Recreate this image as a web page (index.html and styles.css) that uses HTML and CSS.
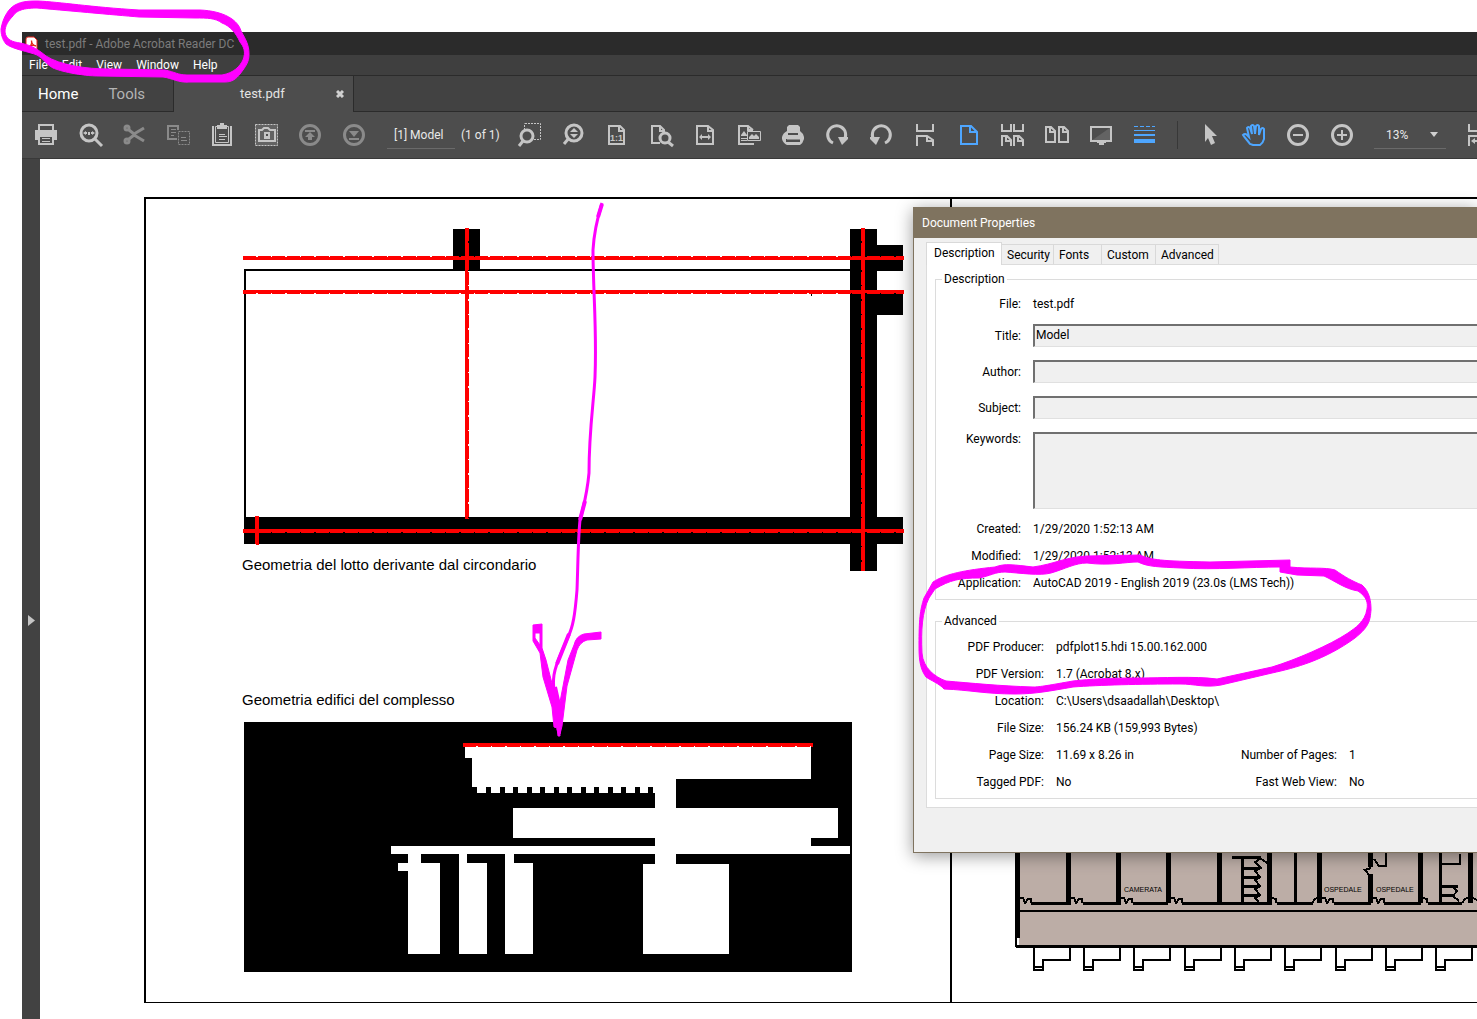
FILE: index.html
```html
<!DOCTYPE html>
<html lang="en">
<head>
    <meta charset="UTF-8">
    <meta name="viewport" content="width=device-width, initial-scale=1.0">
    <title>test.pdf - Adobe Acrobat Reader DC</title>
    <link rel="stylesheet" href="styles.css">
</head>
<body>
    <div class="app">
        <header class="titlebar">
            <svg class="app-icon" width="14" height="16" viewBox="0 0 14 16">
                <path d="M1 3q0-2 2-2h6l3 3v9q0 2-2 2H3q-2 0-2-2z" fill="#fff" stroke="#e5231b"/>
                <path d="M3 11.500c3-1 4-4 3.500-7c0 3 2 5 4.500 5.500c-3-1-6-.5-8 1.500z" fill="none" stroke="#e5231b" stroke-width="1.300"/>
            </svg>
            <span>test.pdf - Adobe Acrobat Reader DC</span>
        </header>

        <nav class="menubar">
            <button>File</button>
            <button>Edit</button>
            <button>View</button>
            <button>Window</button>
            <button>Help</button>
        </nav>

        <div class="tabbar">
            <div class="tab-main">
                <button class="home">Home</button>
                <button class="tools">Tools</button>
            </div>
            <div class="tab-doc">
                <span>test.pdf</span>
                <button class="close" aria-label="Close">
                    <svg width="8" height="8" viewBox="0 0 8 8"><path d="M1 1l6 6M7 1l-6 6" stroke="#d0d0d0" stroke-width="3"/></svg>
                </button>
            </div>
            <div class="tab-rest"></div>
        </div>

        <div class="toolbar">
            <button class="tool" aria-label="Print">
                <svg viewBox="0 0 30 30"><path d="M8 10V5h14v5"/><path class="solid" d="M4 10h22v10h-3v5H7v-5H4z"/><path class="hole" d="M9 17h12v6H9z"/><path class="thin" d="M11 18.500h8M11 21.500h8"/></svg>
            </button>
            <button class="tool" aria-label="Find">
                <svg viewBox="0 0 30 30"><circle class="bold" cx="14" cy="13" r="8"/><path class="bold" d="M20 19l7 7"/><path class="solid" d="M8 13l3-2v1h1v2h-1v1zM20 13l-3-2v1h-1v2h1v1zM13 12h2v3h-2z"/></svg>
            </button>
            <button class="tool" aria-label="Cut" disabled>
                <svg viewBox="0 0 30 30"><circle class="bold" cx="8" cy="8" r="2"/><circle class="bold" cx="8" cy="21" r="2"/><path class="bold" d="M10 10l5 4l10-6M10 19l5-4l10 6"/></svg>
            </button>
            <button class="tool" aria-label="Copy" disabled>
                <svg viewBox="0 0 30 30"><path d="M15 10V6H5v13h9"/><path class="thin" d="M8 9.500h5M8 12.500h5M8 15.500h3M18 17.500h5M18 20.500h6"/><path class="thin dashed" d="M15.500 11.500h11v13h-11z"/></svg>
            </button>
            <button class="tool" aria-label="Paste">
                <svg viewBox="0 0 30 30"><path d="M6 6v19h18V6"/><path class="thin" d="M8.500 6.500h13v16h-13z"/><path class="solid" d="M10 5h3V3h4v2h3v4H10z"/><path class="thin" d="M12 14.500h6M12 16.500h8M12 19.500h6"/></svg>
            </button>
            <button class="tool" aria-label="Take a snapshot">
                <svg viewBox="0 0 30 30"><path class="shade" d="M4 4h23v22H4z"/><path class="thin dashed" d="M4.500 4.500h22v21h-22z"/><path d="M8 10h3l2-2h4l2 2h5v11H8z"/><path class="solid" d="M13 12h6v7h-6z"/><path class="hole" d="M15 14h2v2h-2z"/></svg>
            </button>
            <button class="tool" aria-label="Previous page" disabled>
                <svg viewBox="0 0 30 30"><circle class="bold" cx="15" cy="15" r="9.500"/><path d="M10 11h10"/><path class="solid" d="M15 12l5 5h-3v3h-4v-3h-3z"/></svg>
            </button>
            <button class="tool" aria-label="Next page" disabled>
                <svg viewBox="0 0 30 30"><circle class="bold" cx="15" cy="15" r="9.500"/><path d="M10 19h10"/><path class="solid" d="M10 11h10l-5 6z"/></svg>
            </button>

            <input class="page-input" type="text" value="[1] Model" aria-label="Page">
            <span class="page-count">(1 of 1)</span>

            <button class="tool" aria-label="Marquee zoom">
                <svg viewBox="0 0 30 30"><path class="thin dashed" d="M11 3.500h15.500v16H20M10.500 10V3.500"/><circle class="bold" cx="13" cy="16" r="6"/><path class="bold" d="M9 21l-4 5"/></svg>
            </button>
            <button class="tool" aria-label="Dynamic zoom">
                <svg viewBox="0 0 30 30"><circle class="bold" cx="16" cy="13" r="8"/><path class="bold" d="M11 18l-5 6"/><path class="solid" d="M12 12l4-4l4 4zM12 14h8l-4 4z"/></svg>
            </button>
            <button class="tool" aria-label="Actual size">
                <svg viewBox="0 0 30 30"><path d="M7 6h11l4 4v14H7z"/><path d="M17 6v5h5"/><text x="8" y="21">1:1</text></svg>
            </button>
            <button class="tool" aria-label="Zoom to page level">
                <svg viewBox="0 0 30 30"><path d="M14 23H6V6h8l4 4v2M14 6v5h4"/><circle class="bold" cx="19" cy="18" r="5"/><path class="bold" d="M22 22l5 4"/></svg>
            </button>
            <button class="tool" aria-label="Fit width">
                <svg viewBox="0 0 30 30"><path d="M7 6h11l5 4v14H7z"/><path d="M18 6v5h5M11 17h8"/><path class="solid" d="M9 17l3-3v6zM21 17l-3-3v6z"/></svg>
            </button>
            <button class="tool" aria-label="Fit visible">
                <svg viewBox="0 0 30 30"><path d="M20 24H5V6h9l5 4"/><path d="M14 6v4h5"/><path class="solid" d="M7 15l3-4l3 4v1H7z"/><path class="thin" d="M7 18.500h6M7 20.500h6M13.500 11.500h13v9h-13z"/><path class="solid" d="M15 19v-2l3-3l2 2l2-2l3 3v2z"/></svg>
            </button>
            <button class="tool" aria-label="Print production">
                <svg viewBox="0 0 30 30"><path class="solid" d="M11 5h9l2 2v4q3 2 4 6v2q-1 4-4 6H9q-4-2-5-6v-2q1-4 5-6V7z"/><path class="hole" d="M10 13h10v2H10zM8 19h14v3H8z"/><path d="M9 18.500h13"/></svg>
            </button>
            <button class="tool" aria-label="Rotate clockwise">
                <svg viewBox="0 0 30 30"><path class="bold" d="M11 23a9 9 0 1 1 11-3"/><path class="solid" d="M16 17h10v2l-6 6z"/></svg>
            </button>
            <button class="tool" aria-label="Rotate counterclockwise">
                <svg viewBox="0 0 30 30"><path class="bold" d="M19 23a9 9 0 1 0-11-3"/><path class="solid" d="M14 17H4v2l6 6z"/></svg>
            </button>
            <button class="tool" aria-label="Scrolling pages">
                <svg viewBox="0 0 30 30"><path d="M7 4v7h16V4M7 26V16h10l6 4v6M17 16v5h5"/></svg>
            </button>
            <button class="tool active" aria-label="Single page">
                <svg viewBox="0 0 30 30"><path d="M7 6h10l6 6v12H7z"/><path d="M16 6v6h6"/></svg>
            </button>
            <button class="tool" aria-label="Two page scrolling">
                <svg viewBox="0 0 30 30"><path d="M4 4v7h9V4M16 4v7h9V4M4 26V16h5l4 4v6M8 16v5h5M16 26V16h5l4 4v6M20 16v5h5"/></svg>
            </button>
            <button class="tool" aria-label="Two page view">
                <svg viewBox="0 0 30 30"><path d="M4 7h5l4 4v11H4zM8 7v5h5M17 7h5l4 4v11h-9zM21 7v5h5"/></svg>
            </button>
            <button class="tool" aria-label="Read mode">
                <svg viewBox="0 0 30 30"><path class="shade" d="M25 7v14H5z"/><path d="M4 7h21v14H5V7"/><path class="solid" d="M11 22h9v1h-2v2h-5v-2h-2z"/></svg>
            </button>
            <button class="tool active" aria-label="Line weights">
                <svg viewBox="0 0 30 30"><path class="thin dashes" d="M4 6.500h21"/><path class="thin" d="M4 10.500h21"/><path d="M4 15h21"/><path class="solid" d="M4 19h21v4H4z"/></svg>
            </button>

            <div class="separator"></div>

            <button class="tool" aria-label="Select">
                <svg viewBox="0 0 30 30"><path class="solid" d="M10 4l12 12h-5l3 7l-4 2l-3-7l-3 4z"/></svg>
            </button>
            <button class="tool active" aria-label="Pan">
                <svg viewBox="0 0 30 30"><path d="M11 24c-2-3-5-6-7-9q2-2 4 0l2 2L8 8q1-2 3 0l2 6l-1-8q2-2 3 0l1 8l1-8q2-2 3 0v9l2-6q2-2 3 0v10q-1 4-4 6h-7z"/></svg>
            </button>
            <button class="tool" aria-label="Zoom out">
                <svg viewBox="0 0 30 30"><circle class="bold" cx="15" cy="15" r="9.500"/><path d="M10 15h10"/></svg>
            </button>
            <button class="tool" aria-label="Zoom in">
                <svg viewBox="0 0 30 30"><circle class="bold" cx="15" cy="15" r="9.500"/><path d="M10 15h10M15 10v10"/></svg>
            </button>
            <div class="zoom-box">
                <select class="zoom" aria-label="Zoom level">
                    <option>13%</option>
                </select>
                <svg width="8" height="5" viewBox="0 0 8 5"><path d="M0 0h8L4 5z" fill="#d0d0d0"/></svg>
            </div>
            <button class="tool" aria-label="Fit page">
                <svg viewBox="0 0 30 30"><path d="M6 4v7h18V4M6 26V16h12l6 4v6M12 21h8"/><path class="solid" d="M8 21l4-3v6z"/></svg>
            </button>
        </div>

        <div class="workspace">
            <aside class="nav-pane">
                <button aria-label="Show navigation pane">
                    <svg width="7" height="11" viewBox="0 0 7 11"><path d="M0 0l7 5.500L0 11z" fill="#c5c5c5"/></svg>
                </button>
            </aside>
            <main class="document">
                <svg class="sheet" width="100%" height="100%">
                    <defs>
                        <path id="step" d="M1034 948v22h9v-10h27v-12M1034 967h9"/>
                        <path id="door" d="M1020 898h3l2 5l3-4h3v4"/>
                    </defs>
                    <g transform="translate(-40 -159)">
                        <!-- sheet frame -->
                        <path class="ink" d="M1600 198H145v804M951 198v804"/>
                        <path class="hair" d="M144 1002.500H1600"/>

                        <!-- lot geometry -->
                        <path class="ink" d="M850 270H245v250"/>
                        <path d="M453 229h27v41h-27zM850 229h27v16h26v26h-26v22h26v22h-26v202h26v27h-26v27h-27v-27H244v-27h606zM811 293h3v1h-2v2h-1z"/>
                        <path class="axis" d="M243 258h661M243 292h661M243 531h661M467 228v291M863 228v343M257 516v29"/>
                        <path class="axis-core" d="M243 258.500h661M243 291.500h661M243 530.500h661M466.500 228v291M863.500 228v343M257.500 516v29"/>
                        <text class="caption" x="242" y="570">Geometria del lotto derivante dal circondario</text>

                        <!-- buildings -->
                        <text class="caption" x="242" y="705">Geometria edifici del complesso</text>
                        <path d="M244 722h608v250H244z"/>
                        <path class="paper" d="M465 745h346v34H676v29h162v30h-27v8h39v8H676v10h53v90h-86v-90h12v-10H514v9h19v91h-28V854h-38v9h20v91h-28V854h-38v9h19v91h-32v-83h-10v-8h10v-9h-17v-8h264v-8H513v-30h142v-15H477v-6h-5v-29h-7z"/>
                        <path class="teeth" d="M486 790h168"/>
                        <path class="axis" d="M463 745h350"/>
                        <path class="axis-core" d="M463 744.500h350"/>

                        <!-- floor plan -->
                        <path class="floor" d="M1019 840h500v106h-500z"/>
                        <path d="M1015 840h5v98h-5z"/>
                        <path class="ink" d="M1016 938v9M1019 911h500"/>
                        <path class="wall" d="M1016 946.500h500"/>
                        <path class="partition" d="M1068 840v63M1118.500 840v63M1168.500 840v63M1219 840v63M1269.500 840v63M1319.500 840v63M1370.500 840v27M1370.500 874v29M1420.500 840v63M1470.500 840v63"/>
                        <path class="wall" d="M1031 903h40M1083 903h38M1133 903h35M1182 903h90M1277 903h36M1334 903h37M1384 903h37M1428 903h34"/>
                        <path class="wall" d="M1295 840v63M1242.500 857v46M1440.500 840v63M1232 857h29M1243 868h17M1243 877h17M1243 886h17M1243 895h17M1441 886h17M1441 895h14"/>
                        <path class="ink" d="M1260 859l-5 3l6 6l-6 3l5 6l-5 3l5 6l-5 3l5 6l-5 3l4 4M1260 858l7 5M1374 859l5 7h7V852M1371 868l-6 2l5 6M1441 864h19v-10M1452 886l5 5l-4 5l6 5"/>
                        <g class="ink">
                            <use href="#door"/>
                            <use href="#door" x="51"/>
                            <use href="#door" x="101"/>
                            <use href="#door" x="151"/>
                            <use href="#door" x="302"/>
                            <use href="#door" x="353"/>
                            <path d="M1272 898l4 1v4M1313 903q0-4 5-5M1423 898l4 1v4M1463 903q0-4 5-5M1473 898l4 2"/>
                        </g>
                        <g class="ink">
                            <use href="#step"/>
                            <use href="#step" x="50"/>
                            <use href="#step" x="100"/>
                            <use href="#step" x="151"/>
                            <use href="#step" x="201"/>
                            <use href="#step" x="251"/>
                            <use href="#step" x="302"/>
                            <use href="#step" x="352"/>
                            <use href="#step" x="402"/>
                        </g>
                        <text class="room" x="1124" y="892">CAMERATA</text>
                        <text class="room" x="1324" y="892">OSPEDALE</text>
                        <text class="room" x="1376" y="892">OSPEDALE</text>
                    </g>
                </svg>
            </main>
        </div>
    </div>

    <section class="dialog">
        <h1>Document Properties</h1>
        <div class="dialog-tabs">
            <button class="selected">Description</button>
            <button class="t-security">Security</button>
            <button class="t-fonts">Fonts</button>
            <button class="t-custom">Custom</button>
            <button class="t-advanced">Advanced</button>
        </div>
        <div class="panel">
            <fieldset>
                <legend>Description</legend>
                <div class="fields">
                    <span class="label">File:</span><span>test.pdf</span>
                    <label for="title">Title:</label><input id="title" type="text" value="Model">
                    <label for="author">Author:</label><input id="author" type="text">
                    <label for="subject">Subject:</label><input id="subject" type="text">
                    <label for="keywords" class="top">Keywords:</label><textarea id="keywords"></textarea>
                    <span class="label">Created:</span><span>1/29/2020 1:52:13 AM</span>
                    <span class="label">Modified:</span><span>1/29/2020 1:52:13 AM</span>
                    <span class="label">Application:</span><span>AutoCAD 2019 - English 2019 (23.0s (LMS Tech))</span>
                </div>
            </fieldset>
            <fieldset>
                <legend>Advanced</legend>
                <div class="fields advanced">
                    <span class="label">PDF Producer:</span><span class="wide">pdfplot15.hdi 15.00.162.000</span>
                    <span class="label">PDF Version:</span><span class="wide">1.7 (Acrobat 8.x)</span>
                    <span class="label">Location:</span><span class="wide">C:\Users\dsaadallah\Desktop\</span>
                    <span class="label">File Size:</span><span class="wide">156.24 KB (159,993 Bytes)</span>
                    <span class="label">Page Size:</span><span>11.69 x 8.26 in</span>
                    <span class="label">Number of Pages:</span><span>1</span>
                    <span class="label">Tagged PDF:</span><span>No</span>
                    <span class="label">Fast Web View:</span><span>No</span>
                </div>
            </fieldset>
        </div>
    </section>

    <!-- marker pen -->
    <svg class="marker" width="100%" height="100%">
        <path class="blob" d="M139 10H200C224 11 238 20 241 31C246 40 249 45 249 54C249 62 246 66 240 74C236 79 232 82 225 82H190C178 83 172 78 163 77L100 76C80 76 60 71 53 68C47 65 43 58 37 55C30 52 12 49 6 44C2 39 1 34 1 29C3 17 9 8 15 5C22 1 30 1 38 1C60 2 90 7 139 10zM139 17C115 15 60 10 37 8C20 8 16 12 13 16C8 21 5 26 5 32C6 40 13 42 20 43C32 45 40 51 46 56C60 65 85 69 110 69L165 70C175 72 178 75 187 75H222C234 73 240 66 243 60C246 52 244 47 240 42C236 33 230 26 222 23C215 18 208 18 195 18z"/>
        <path class="blob" d="M933 582C945 574 965 570 995 567C1005 563 1015 565 1033 567C1055 564 1065 557 1087 556L1140 555C1152 560 1160 561 1210 562L1290 560V567C1310 569 1325 567 1335 570C1345 577 1352 581 1362 585C1370 592 1371 602 1371 610C1370 620 1370 626 1355 638C1325 660 1295 668 1272 673L1221 685C1205 688 1195 684 1180 684C1140 684 1100 685 1073 687C1050 691 1035 694 1015 694C985 694 970 690 944 689C940 684 930 680 926 677C919 668 919 655 919 645C919 620 920 610 924 598zM935 589C950 580 960 578 979 578C990 576 995 572 1005 572C1020 573 1040 576 1051 573C1065 569 1075 563 1087 563C1110 566 1125 562 1138 562C1148 567 1160 567 1181 568C1215 570 1250 567 1280 567V572L1297 575L1324 576C1335 581 1345 589 1358 591C1367 597 1368 603 1367 609C1365 622 1355 628 1348 633C1330 645 1295 660 1272 667L1217 679C1195 676 1160 678 1141 678C1110 678 1090 679 1073 681C1050 685 1040 687 1033 687C1000 686 970 683 946 681C935 677 923 668 922 653C921 630 922 612 929 598z"/>
        <path class="pen" d="M602 203C598 216 594 232 593 250C593 290 597 330 595 377C594 400 589 430 589 473C587 495 584 505 580 520C578 540 578 565 577 590C575 615 573 627 568 637C562 652 556 662 554 675C552 690 556 695 558 700"/>
        <path class="pen pen-wide" d="M602 204L598 217M585 501L580 520M569 634L557 664M555 687L560 710"/>
        <path class="blob" d="M533 625l9-1v24l4 12l10 39l4 12v25h-2l-1-8l-3-1l-2-20l-9-30l-3-24l-7-12zM535 633v5l5 7v-12z"/>
        <path class="blob" d="M601 632v7l-14 1q-7 2-10 10l-10 36l-5 40l-2 8l-3-4l3-28l8-42l6-15q2-9 10-11z"/>
    </svg>
</body>
</html>
```
FILE: styles.css
```css
* {
    box-sizing: border-box;
}

body {
    position: relative;
    height: 100vh;
    margin: 0;
    overflow: hidden;
    background: #fff;
    font-family: Roboto, "Noto Sans", sans-serif;
    font-size: 12px;
    line-height: 16px;
    color: #000;
}

button {
    padding: 0;
    border: none;
    background: none;
    font: inherit;
    color: inherit;
    white-space: nowrap;
}

/* application window */
.app {
    display: flex;
    flex-direction: column;
    height: 100vh;
    padding: 32px 0 0 22px;
}

.titlebar {
    display: flex;
    align-items: center;
    gap: 6px;
    flex: none;
    height: 23px;
    padding-left: 3px;
    background: #2b2b2b;
    color: #7c7c7c;
}

.menubar {
    display: flex;
    gap: 14px;
    flex: none;
    height: 20px;
    padding-left: 7px;
    background: #3f3f3f;
    color: #fff;
}

.tabbar {
    display: flex;
    flex: none;
    height: 37px;
    border-top: 1px solid #2b2b2b;
    background: #424242;
}

.tab-main {
    display: flex;
    align-items: center;
    gap: 30px;
    width: 152px;
    padding-left: 16px;
    border-right: 1px solid #2b2b2b;
    border-bottom: 1px solid #2b2b2b;
    font-size: 15px;
}

.home {
    color: #fff;
}

.tools {
    color: #b4b4b4;
}

.tab-doc {
    display: flex;
    align-items: center;
    justify-content: space-between;
    width: 179px;
    padding: 0 9px 0 66px;
    background: #4d4d4d;
    color: #e4e4e4;
    font-size: 13px;
}

.close {
    display: flex;
}

.tab-rest {
    flex: 1;
    border-left: 1px solid #2b2b2b;
    border-bottom: 1px solid #2b2b2b;
}

.toolbar {
    display: flex;
    align-items: center;
    flex: none;
    height: 47px;
    padding-left: 2px;
    border-bottom: 1px solid #393939;
    background: #4d4d4d;
    color: #e8e8e8;
    overflow: hidden;
}

.tool {
    display: flex;
    justify-content: center;
    flex: none;
    width: 44px;
    color: #c5c5c5;
}

.tool:disabled {
    color: #8a8a8a;
}

.tool.active {
    color: #4ea6ff;
}

.tool svg {
    width: 30px;
    height: 30px;
    fill: none;
    stroke: currentColor;
    stroke-width: 2;
}

.tool .bold {
    stroke-width: 3;
}

.tool .thin {
    stroke-width: 1;
}

.tool .dashed {
    stroke-dasharray: 2 1;
}

.tool .dashes {
    stroke-dasharray: 4 2;
}

.tool .solid {
    fill: currentColor;
    stroke: none;
}

.tool .hole {
    fill: #4d4d4d;
    stroke: none;
}

.tool .shade {
    fill: #636363;
    stroke: none;
}

.tool text {
    fill: currentColor;
    stroke: none;
    font: bold 9px "Liberation Sans", sans-serif;
}

.page-input {
    flex: none;
    width: 68px;
    height: 28px;
    margin-left: 11px;
    padding: 0 7px;
    border: none;
    border-bottom: 1px solid #6a6a6a;
    background: none;
    font: inherit;
    color: inherit;
}

.page-count {
    flex: none;
    width: 52px;
    padding-left: 6px;
    white-space: nowrap;
}

.separator {
    flex: none;
    width: 1px;
    height: 28px;
    margin: 0 10px;
    background: #383838;
}

.zoom-box {
    display: flex;
    align-items: center;
    flex: none;
    width: 72px;
    height: 28px;
    margin: 0 10px;
    padding: 0 8px 0 12px;
    border-bottom: 1px solid #6a6a6a;
}

.zoom {
    flex: 1;
    width: 40px;
    padding: 0;
    border: none;
    background: none;
    appearance: none;
    font: inherit;
    color: inherit;
}

.workspace {
    display: flex;
    flex: 1;
    min-height: 0;
}

.nav-pane {
    display: flex;
    align-items: center;
    width: 18px;
    padding: 66px 0 0 6px;
    background: #424242;
}

.document {
    flex: 1;
    min-width: 0;
    overflow: hidden;
}

/* drawing */
.sheet {
    display: block;
    shape-rendering: crispEdges;
}

.ink {
    fill: none;
    stroke: #000;
    stroke-width: 2;
}

.hair {
    stroke: #000;
}

.axis,
.axis-core {
    fill: none;
    stroke: #f00;
    stroke-width: 4;
    stroke-dasharray: 13 1.5;
}

.axis-core {
    stroke-width: 3;
    stroke-dasharray: none;
}

.paper {
    fill: #fff;
}

.teeth {
    stroke: #000;
    stroke-width: 6;
    stroke-dasharray: 5 8.5;
}

.floor {
    fill: #bcada6;
}

.wall {
    stroke: #000;
    stroke-width: 3;
}

.partition {
    stroke: #000;
    stroke-width: 5;
}

.caption {
    font: 15px "Liberation Sans", sans-serif;
}

.room {
    font: 7px "Liberation Sans", sans-serif;
}

/* document properties, docked to the right edge */
.dialog {
    position: absolute;
    top: 207px;
    left: 913px;
    right: 0;
    height: 646px;
    border: 1px solid #7f735f;
    border-right: none;
    background: #f0f0f0;
    box-shadow: 0 3px 16px rgba(0, 0, 0, 0.4);
}

.dialog h1 {
    height: 30px;
    margin: 0;
    padding-left: 8px;
    background: #7f735f;
    color: #fff;
    font-size: 12px;
    font-weight: normal;
    line-height: 30px;
}

.dialog-tabs {
    display: flex;
    align-items: flex-end;
    height: 26px;
    padding-left: 12px;
}

.dialog-tabs button {
    height: 20px;
    padding-left: 5px;
    border: 1px solid #d9d9d9;
    border-left: none;
    border-bottom: none;
    text-align: left;
}

.dialog-tabs .selected {
    position: relative;
    top: 1px;
    width: 76px;
    height: 23px;
    padding: 0 0 2px 7px;
    border-left: 1px solid #d9d9d9;
    background: #fff;
}

.t-security {
    width: 52px;
}

.t-fonts {
    width: 48px;
}

.t-custom {
    width: 54px;
}

.t-advanced {
    width: 63px;
}

.panel {
    margin-left: 12px;
    padding: 6px 0 8px 8px;
    border: 1px solid #dcdcdc;
    border-right: none;
    background: #fff;
}

fieldset {
    min-width: 0;
    margin: 0 0 13px;
    padding: 10px 0 9px;
    border: 1px solid #dcdcdc;
    border-right: none;
}

fieldset:last-child {
    margin-bottom: 0;
}

legend {
    margin-left: 6px;
    padding: 0 2px;
}

.fields {
    display: grid;
    grid-template-columns: 85px 1fr;
    gap: 13px 12px;
    align-items: center;
    line-height: 14px;
    white-space: nowrap;
}

.fields.advanced {
    grid-template-columns: 108px 161px 108px 1fr;
    padding-top: 1px;
}

.wide {
    grid-column: span 3;
}

.label,
.fields label {
    text-align: right;
}

.fields .top {
    align-self: start;
}

.fields input,
.fields textarea {
    display: block;
    width: 100%;
    height: 23px;
    padding: 0 1px 2px;
    border: 1px solid #e0e0e0;
    border-top: 2px solid #707070;
    border-left: 2px solid #707070;
    border-right: none;
    background: #f0f0f0;
    font: inherit;
    resize: none;
}

.fields textarea {
    height: 77px;
}

/* marker pen over everything */
.marker {
    position: absolute;
    top: 0;
    left: 0;
    pointer-events: none;
}

.blob {
    fill: #f0f;
    fill-rule: evenodd;
    stroke: #f0f;
    stroke-linejoin: round;
}

.pen {
    fill: none;
    stroke: #f0f;
    stroke-width: 3;
}

.pen-wide {
    stroke-width: 4;
}
```
